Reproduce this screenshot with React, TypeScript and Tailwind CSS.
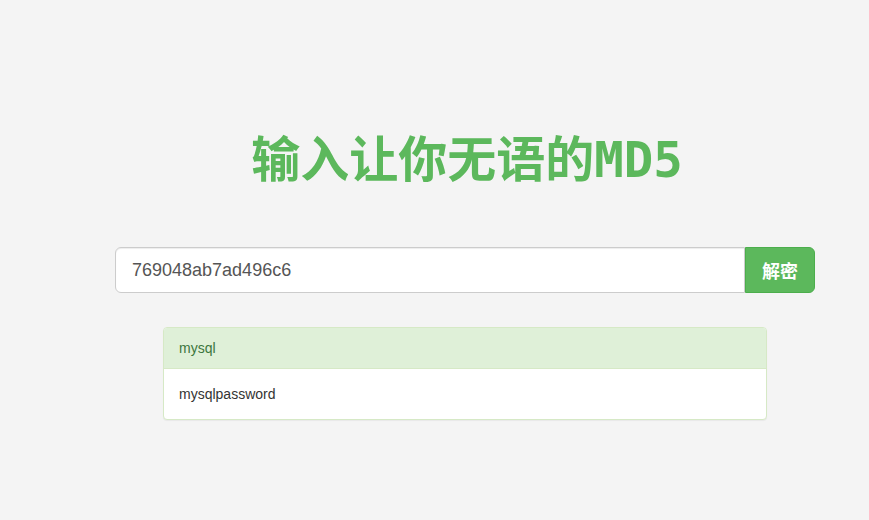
import React from "react";

export default function App() {
  return (
    <div className="min-h-[520px] w-full bg-[#f4f4f4] pl-[61px]" style={{ fontFamily: '"Liberation Sans", Arial, sans-serif' }}>
      <div className="flex flex-col items-center pt-[131px]">
        <h1
          className="m-0 pl-[4px] text-[49px] font-bold leading-[60px] text-[#5cb85c]"
          style={{ fontFamily: '"DejaVu Sans Mono", "Noto Sans CJK SC", monospace' }}
        >
          输入让你无语的MD5
        </h1>
        <div className="mt-[56px] flex h-[46px] w-[700px]">
          <div className="flex flex-1 items-center rounded-l-[6px] border border-[#ccc] bg-white px-[16px] text-[18px] text-[#555] shadow-[inset_0_1px_1px_rgba(0,0,0,0.075)]">
            769048ab7ad496c6
          </div>
          <button
            className="flex w-[70px] items-center justify-center rounded-r-[6px] border border-[#4cae4c] bg-[#5cb85c] text-[18px] font-bold text-white"
            style={{ fontFamily: '"Noto Sans CJK SC", sans-serif' }}
          >
            解密
          </button>
        </div>
        <div className="mt-[34px] w-[604px] overflow-hidden rounded-[4px] border border-[#d6e9c6] bg-white shadow-[0_1px_1px_rgba(0,0,0,0.05)]">
          <div className="flex h-[41px] items-center border-b border-[#d6e9c6] bg-[#dff0d8] px-[15px] text-[14px] text-[#3c763d]">
            mysql
          </div>
          <div className="flex h-[50px] items-center px-[15px] text-[14px] text-[#333]">
            mysqlpassword
          </div>
        </div>
      </div>
    </div>
  );
}
